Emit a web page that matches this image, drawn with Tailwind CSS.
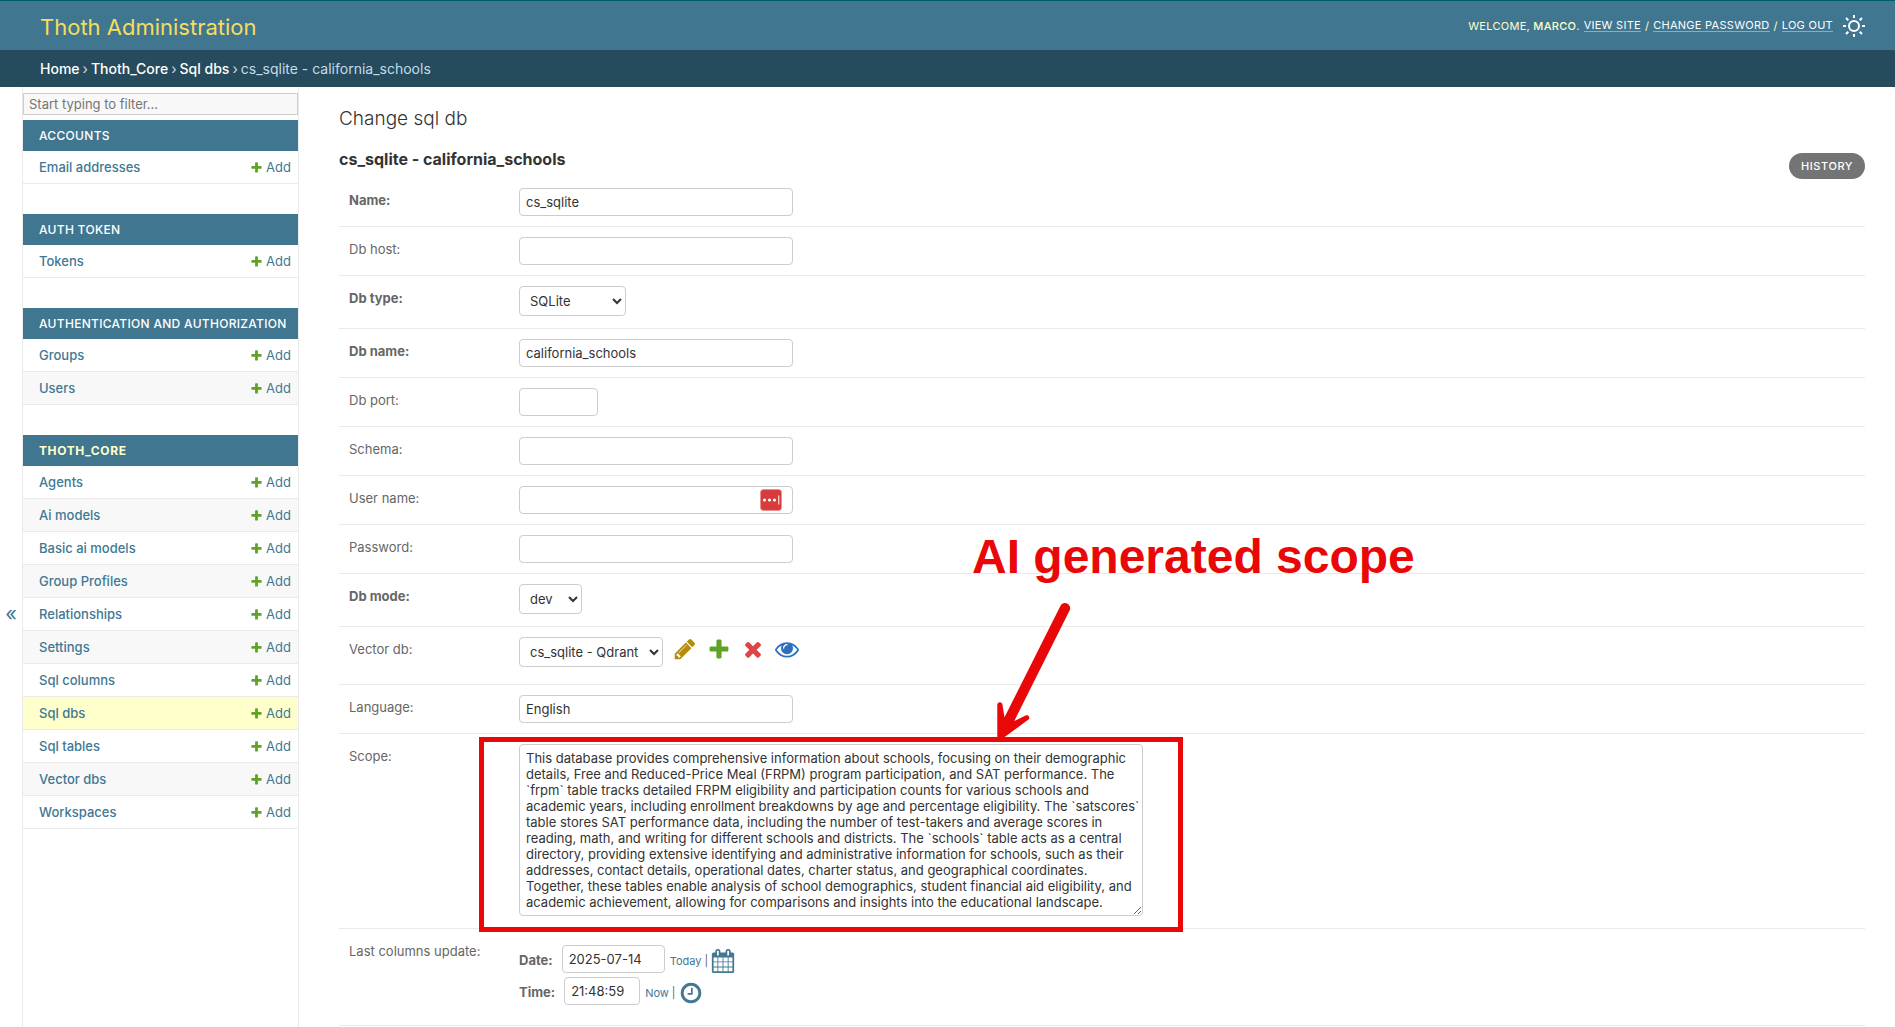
<!DOCTYPE html>
<html lang="en">
<head>
<meta charset="utf-8">
<meta name="viewport" content="width=device-width, initial-scale=1">
<title>Change sql db | Thoth Administration</title>
<script src="https://cdn.jsdelivr.net/npm/@tailwindcss/browser@4"></script>
</head>
<body class="flex min-h-screen flex-col bg-white font-['Inter',sans-serif] text-[13px] leading-4 text-[#333]">

<!-- Shared icons -->
<svg class="hidden" aria-hidden="true">
  <symbol id="plus" viewBox="0 0 1792 1792"><path fill="#5fa225" d="M1600 796v192q0 40-28 68t-68 28h-416v416q0 40-28 68t-68 28h-192q-40 0-68-28t-28-68v-416h-416q-40 0-68-28t-28-68v-192q0-40 28-68t68-28h416v-416q0-40 28-68t68-28h192q40 0 68 28t28 68v416h416q40 0 68 28t28 68z"/></symbol>
</svg>

<header class="flex h-[50px] items-center justify-between border-t border-[#005c69] bg-[#417690] pr-[30px] pl-10">
  <a href="#" class="pt-0.5 text-[22px] leading-7 text-[#f5dd5d]">Thoth Administration</a>
  <div class="flex items-center gap-2.5 text-[11px] tracking-wide text-[#ffc] uppercase">
    <div class="flex items-center gap-1">
      <span>Welcome, <strong class="font-medium">Marco</strong>.</span>
      <a href="#" class="border-b border-white/40 leading-3 text-white">View site</a> /
      <a href="#" class="border-b border-white/40 leading-3 text-white">Change password</a> /
      <button type="button" class="border-b border-white/40 leading-3 tracking-wide text-white uppercase">Log out</button>
    </div>
    <button type="button" aria-label="Toggle theme">
      <svg class="size-[22px]" viewBox="0 0 22 22" fill="none" stroke="#fff" stroke-width="2"><circle cx="11" cy="11" r="5"/><path d="M11 0v3M11 19v3M0 11h3M19 11h3M3 3l2.300 2.300M16.700 16.700l2.300 2.300M3 19l2.300-2.300M16.700 5.300L19 3"/></svg>
    </button>
  </div>
</header>

<nav aria-label="Breadcrumbs" class="flex h-[37px] items-center gap-[3px] bg-[#264b5d] px-10 text-sm text-[#c4dce8]">
  <a href="#" class="font-medium text-white">Home</a> ›
  <a href="#" class="font-medium text-white">Thoth_Core</a> ›
  <a href="#" class="font-medium text-white">Sql dbs</a> ›
  <span>cs_sqlite - california_schools</span>
</nav>

<div class="flex grow">
  <button type="button" aria-label="Toggle navigation" class="flex w-[23px] shrink-0 items-start justify-center border-r border-[#eaeaea] pt-[517px] text-xl leading-5 text-[#417690]">«</button>

  <nav aria-label="Sidebar" class="w-[276px] shrink-0 border-r border-[#eaeaea] pt-1.5">
    <input type="search" aria-label="Filter navigation items" placeholder="Start typing to filter…" class="mb-[5px] block h-[22px] w-full border border-[#ccc] bg-[#f8f8f8] px-[5px] placeholder:text-[#757575]">
    <div id="modules" class="flex flex-col gap-[30px]"></div>
  </nav>

  <main class="min-w-0 grow pt-5 pr-[30px] pl-10">
    <h1 class="mb-[18px] text-[19px] leading-6 font-light">Change sql db</h1>
    <div class="flex h-[29px] items-start justify-between">
      <h2 class="text-base leading-5 font-bold">cs_sqlite - california_schools</h2>
      <a href="#" class="mt-1 shrink-0 rounded-full bg-[#747474] px-3 py-[5px] text-[11px] font-medium tracking-wider text-white uppercase">History</a>
    </div>

    <form class="text-[#666]">
      <div class="flex border-b border-[#eaeaea] px-2.5 py-2.5">
        <label for="name" class="mt-1 w-[170px] shrink-0 font-bold">Name:</label>
        <input id="name" type="text" value="cs_sqlite" class="h-7 w-[274px] rounded border border-[#ccc] px-1.5 text-[#333]">
      </div>
      <div class="flex border-b border-[#eaeaea] px-2.5 py-2.5">
        <label for="host" class="mt-1 w-[170px] shrink-0">Db host:</label>
        <input id="host" type="text" class="h-7 w-[274px] rounded border border-[#ccc] px-1.5 text-[#333]">
      </div>
      <div class="flex border-b border-[#eaeaea] px-2.5 pt-2.5 pb-3">
        <label for="type" class="mt-1 w-[170px] shrink-0 font-bold">Db type:</label>
        <select id="type" class="h-[30px] w-[107px] rounded border border-[#ccc] bg-white px-1.5 text-[#333]"><option>SQLite</option></select>
      </div>
      <div class="flex border-b border-[#eaeaea] px-2.5 py-2.5">
        <label for="dbname" class="mt-1 w-[170px] shrink-0 font-bold">Db name:</label>
        <input id="dbname" type="text" value="california_schools" class="h-7 w-[274px] rounded border border-[#ccc] px-1.5 text-[#333]">
      </div>
      <div class="flex border-b border-[#eaeaea] px-2.5 py-2.5">
        <label for="port" class="mt-1 w-[170px] shrink-0">Db port:</label>
        <input id="port" type="text" class="h-7 w-[79px] rounded border border-[#ccc] px-1.5 text-[#333]">
      </div>
      <div class="flex border-b border-[#eaeaea] px-2.5 py-2.5">
        <label for="schema" class="mt-1 w-[170px] shrink-0">Schema:</label>
        <input id="schema" type="text" class="h-7 w-[274px] rounded border border-[#ccc] px-1.5 text-[#333]">
      </div>
      <div class="flex border-b border-[#eaeaea] px-2.5 py-2.5">
        <label for="user" class="mt-1 w-[170px] shrink-0">User name:</label>
        <div class="relative">
          <input id="user" type="text" class="block h-7 w-[274px] rounded border border-[#ccc] px-1.5 text-[#333]">
          <svg class="absolute top-[3px] right-[11px] size-[22px]" viewBox="0 0 22 22"><rect x=".5" y=".5" width="21" height="21" rx="3" fill="#d83b3b" stroke="#e88" stroke-width=".6"/><g fill="#fff"><circle cx="4.500" cy="11" r="1.600"/><circle cx="9.500" cy="11" r="1.600"/><circle cx="14.500" cy="11" r="1.600"/><path d="M18.300 6.500h1v9h-1z"/></g></svg>
        </div>
      </div>
      <div class="flex border-b border-[#eaeaea] px-2.5 py-2.5">
        <label for="password" class="mt-1 w-[170px] shrink-0">Password:</label>
        <input id="password" type="text" class="h-7 w-[274px] rounded border border-[#ccc] px-1.5 text-[#333]">
      </div>
      <div class="flex border-b border-[#eaeaea] px-2.5 pt-2.5 pb-3">
        <label for="mode" class="mt-1 w-[170px] shrink-0 font-bold">Db mode:</label>
        <select id="mode" class="h-[30px] w-[63px] rounded border border-[#ccc] bg-white px-1.5 text-[#333]"><option>dev</option></select>
      </div>
      <div class="flex border-b border-[#eaeaea] px-2.5 pt-2.5 pb-[17px]">
        <label for="vector" class="mt-1 w-[170px] shrink-0">Vector db:</label>
        <select id="vector" class="mr-2.5 h-[30px] w-[144px] rounded border border-[#ccc] bg-white px-1.5 text-[#333]"><option>cs_sqlite - Qdrant</option></select>
        <div class="flex gap-2.5">
          <a href="#" aria-label="Change selected vector db"><svg class="size-6" viewBox="0 0 1792 1792"><path fill="#b48c08" d="M491 1536l91-91-235-235-91 91v107h128v128h107zm523-928q0-22-22-22-10 0-17 7l-542 542q-7 7-7 17 0 22 22 22 10 0 17-7l542-542q7-7 7-17zm-54-192l416 416-832 832h-416v-416zm683 96q0 53-37 90l-166 166-416-416 166-165q36-38 90-38 53 0 91 38l235 234q37 39 37 91z"/></svg></a>
          <a href="#" aria-label="Add another vector db"><svg class="size-6"><use href="#plus"/></svg></a>
          <a href="#" aria-label="Delete selected vector db"><svg class="size-6" viewBox="0 0 1792 1792"><path fill="#dd4646" d="M1490 1322q0 40-28 68l-136 136q-28 28-68 28t-68-28l-294-294-294 294q-28 28-68 28t-68-28l-136-136q-28-28-28-68t28-68l294-294-294-294q-28-28-28-68t28-68l136-136q28-28 68-28t68 28l294 294 294-294q28-28 68-28t68 28l136 136q28 28 28 68t-28 68l-294 294 294 294q28 28 28 68z"/></svg></a>
          <a href="#" aria-label="View selected vector db"><svg class="size-6" viewBox="0 0 1792 1792"><path fill="#2b70bf" d="M1664 960q-152-236-381-353 61 104 61 225 0 185-131.500 316.500t-316.500 131.500-316.500-131.500-131.500-316.500q0-121 61-225-229 117-381 353 133 205 333.500 326.500t434.500 121.500 434.500-121.500 333.500-326.500zm-720-384q0-20-14-34t-34-14q-125 0-214.500 89.500t-89.500 214.500q0 20 14 34t34 14 34-14 14-34q0-86 61-147t147-61q20 0 34-14t14-34zm848 384q0 34-20 69-140 230-376.500 368.500t-499.500 138.500-499.500-139-376.500-368q-20-35-20-69t20-69q140-229 376.500-368t499.500-139 499.500 139 376.500 368q20 35 20 69z"/></svg></a>
        </div>
      </div>
      <div class="flex border-b border-[#eaeaea] px-2.5 py-2.5">
        <label for="language" class="mt-1 w-[170px] shrink-0">Language:</label>
        <input id="language" type="text" value="English" class="h-7 w-[274px] rounded border border-[#ccc] px-1.5 text-[#333]">
      </div>
      <div class="relative flex border-b border-[#eaeaea] px-2.5 pt-2.5 pb-3">
        <label for="scope" class="mt-1 w-[170px] shrink-0">Scope:</label>
        <textarea id="scope" class="h-[172px] w-[624px] overflow-hidden rounded border border-[#ccc] px-1.5 py-[5px] whitespace-pre text-[#333]">This database provides comprehensive information about schools, focusing on their demographic
details, Free and Reduced-Price Meal (FRPM) program participation, and SAT performance. The
`frpm` table tracks detailed FRPM eligibility and participation counts for various schools and
academic years, including enrollment breakdowns by age and percentage eligibility. The `satscores`
table stores SAT performance data, including the number of test-takers and average scores in
reading, math, and writing for different schools and districts. The `schools` table acts as a central
directory, providing extensive identifying and administrative information for schools, such as their
addresses, contact details, operational dates, charter status, and geographical coordinates.
Together, these tables enable analysis of school demographics, student financial aid eligibility, and
academic achievement, allowing for comparisons and insights into the educational landscape.</textarea>

        <!-- Callout over the scope field -->
        <div class="pointer-events-none absolute top-[3px] left-[140px] h-[195px] w-[704px] border-5 border-[#e90707]"></div>
        <svg class="pointer-events-none absolute top-[-134px] left-[651px] h-[144px] w-[90px]" viewBox="0 0 90 144"><path fill="#e90707" d="M70.400 6A5 5 0 0 1 79.700 10.300L24.300 121L36 115.300A2.500 2.500 0 0 1 38.500 119.500L15 136.700L7.300 140V104.300A2.600 2.600 0 0 1 12.400 104.300L14.500 117.300Z"/></svg>
        <p class="pointer-events-none absolute top-[-204px] left-[633px] font-['Liberation_Sans',Arial,sans-serif] text-5xl leading-[54px] font-bold whitespace-nowrap text-[#e90707]">AI generated scope</p>
      </div>
      <div class="flex border-b border-[#eaeaea] px-2.5 pt-2.5 pb-5">
        <span class="mt-1 w-[170px] shrink-0">Last columns update:</span>
        <div class="mt-1.5 flex flex-col gap-1">
          <div class="flex h-7 items-center">
            <label for="date" class="mt-0.5 mr-[9px] font-bold">Date:</label>
            <input id="date" type="text" value="2025-07-14" class="mr-[5px] h-7 w-[103px] rounded border border-[#ccc] px-1.5 text-[#333]">
            <span class="mt-1 flex items-center gap-[3px] text-[11px]"><a href="#" class="text-[#417893]">Today</a> |
            <a href="#" aria-label="Choose a date"><svg class="size-6" viewBox="0 0 1792 1792"><path fill="#417893" d="M192 1664h288v-288h-288v288zm352 0h320v-288h-320v288zm-352-352h288v-320h-288v320zm352 0h320v-320h-320v320zm-352-384h288v-288h-288v288zm736 736h320v-288h-320v288zm-384-736h320v-288h-320v288zm768 736h288v-288h-288v288zm-384-352h320v-320h-320v320zm-352-864v-288q0-13-9.500-22.500t-22.500-9.500h-64q-13 0-22.500 9.500t-9.500 22.500v288q0 13 9.500 22.500t22.500 9.500h64q13 0 22.500-9.500t9.500-22.500zm736 864h288v-320h-288v320zm-384-384h320v-288h-320v288zm384 0h288v-288h-288v288zm32-480v-288q0-13-9.500-22.500t-22.500-9.500h-64q-13 0-22.500 9.500t-9.500 22.500v288q0 13 9.500 22.500t22.500 9.500h64q13 0 22.500-9.500t9.500-22.500zm384-64v1280q0 52-38 90t-90 38h-1408q-52 0-90-38t-38-90v-1280q0-52 38-90t90-38h128v-96q0-66 47-113t113-47h64q66 0 113 47t47 113v96h384v-96q0-66 47-113t113-47h64q66 0 113 47t47 113v96h128q52 0 90 38t38 90z"/></svg></a></span>
          </div>
          <div class="flex h-7 items-center">
            <label for="time" class="mt-0.5 mr-[9px] font-bold">Time:</label>
            <input id="time" type="text" value="21:48:59" class="mr-[5px] h-7 w-[76px] rounded border border-[#ccc] px-1.5 text-[#333]">
            <span class="mt-1 flex items-center gap-[3px] text-[11px]"><a href="#" class="text-[#417893]">Now</a> |
            <a href="#" aria-label="Choose a time"><svg class="size-6" viewBox="0 0 1792 1792"><path fill="#417893" d="M1024 544v448q0 14-9 23t-23 9h-320q-14 0-23-9t-9-23v-64q0-14 9-23t23-9h224v-352q0-14 9-23t23-9h64q14 0 23 9t9 23zm416 352q0-148-73-273t-198-198-273-73-273 73-198 198-73 273 73 273 198 198 273 73 273-73 198-198 73-273zm224 0q0 209-103 385.500t-279.500 279.500-385.500 103-385.500-103-279.500-279.500-103-385.500 103-385.500 279.500-279.500 385.500-103 385.500 103 279.500 279.500 103 385.500z"/></svg></a></span>
          </div>
        </div>
      </div>
    </form>
  </main>
</div>

<script>
  const modules = [
    ["Accounts", ["Email addresses"]],
    ["Auth Token", ["Tokens"]],
    ["Authentication and Authorization", ["Groups", "Users"]],
    ["Thoth_Core", ["Agents", "Ai models", "Basic ai models", "Group Profiles", "Relationships", "Settings", "Sql columns", "Sql dbs", "Sql tables", "Vector dbs", "Workspaces"]]
  ];
  document.getElementById("modules").innerHTML = modules.map(([title, models]) => `
    <table class="w-full border-separate border-spacing-0">
      <caption class="h-[31px] bg-[#417690] pl-4 text-left text-xs leading-[31px] whitespace-nowrap uppercase ${title === "Thoth_Core" ? "font-bold tracking-wider text-[#ffc]" : "font-medium tracking-wide text-white"}"><a href="#">${title}</a></caption>
      <tbody>${models.map((m, i) => `
        <tr class="${m === "Sql dbs" ? "bg-[#ffc]" : i % 2 ? "bg-[#f8f8f8]" : "bg-white"}">
          <th scope="row" class="h-[33px] border-b border-[#eaeaea] pl-4 text-left font-medium"><a href="#" class="text-[#417893]">${m}</a></th>
          <td class="h-[33px] border-b border-[#eaeaea] pr-[7px]"><a href="#" class="flex items-center justify-end gap-[3px] text-[#417893]"><svg class="size-[13px]"><use href="#plus"/></svg>Add</a></td>
        </tr>`).join("")}
      </tbody>
    </table>`).join("");
</script>
</body>
</html>
